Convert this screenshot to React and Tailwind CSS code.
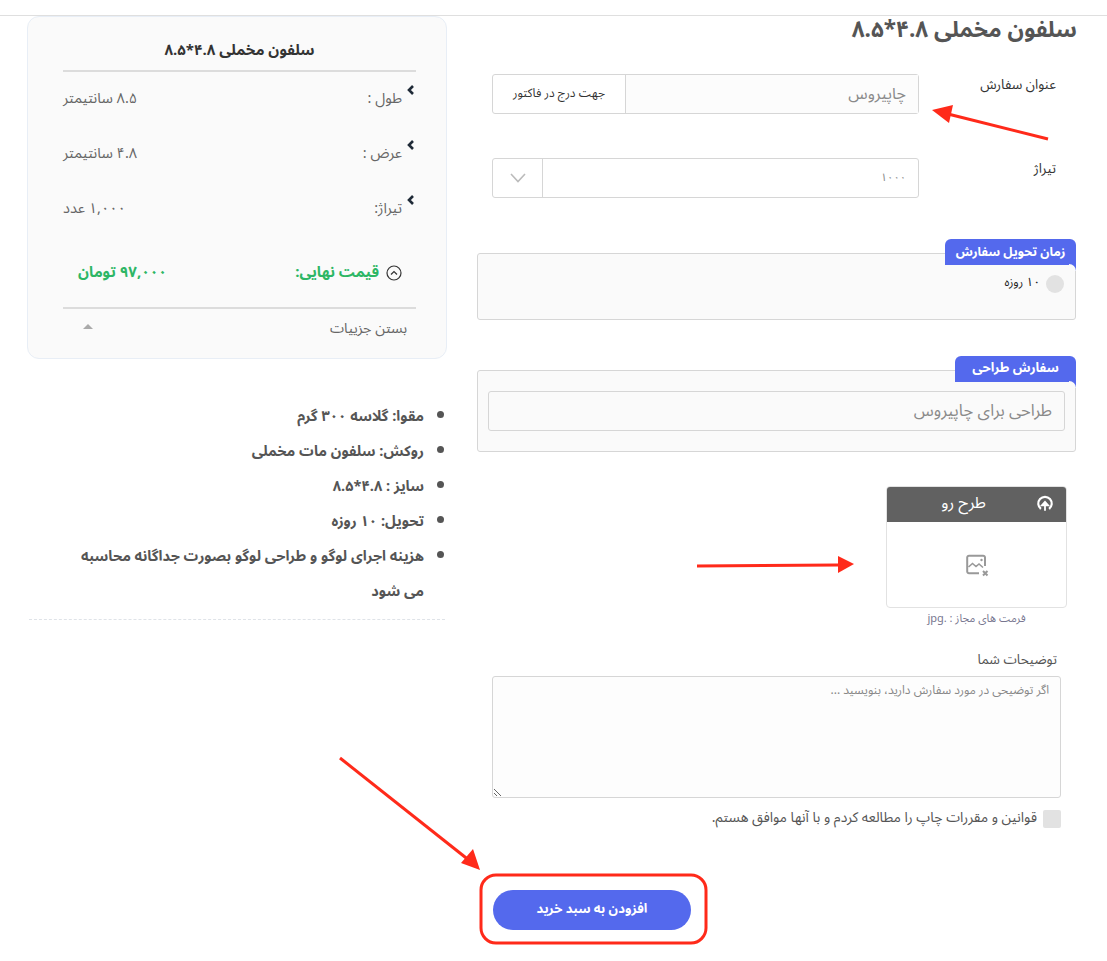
import React from "react";

const FF = "font-['Noto_Sans_Arabic','Vazirmatn','DejaVu_Sans','Noto_Sans',sans-serif]";

function Chevron() {
  return (
    <svg viewBox="0 0 8 10" className="absolute right-[-13px] top-[-3px] w-[8px] h-[10px]" fill="none" stroke="#1f2a37" strokeWidth="2.6">
      <path d="M6 1 L2 5 L6 9" />
    </svg>
  );
}

function SpecRow({ label, value }) {
  return (
    <div className="h-[55px] flex items-center justify-between text-[14.5px] text-[#666] pb-[1px]">
      <span className="relative mr-[14px]">{label}<Chevron /></span>
      <span>{value}</span>
    </div>
  );
}

function Arrows() {
  return (
    <svg className="absolute left-0 top-0 w-[1107px] h-[961px] pointer-events-none" viewBox="0 0 1107 961" fill="none">
      <path d="M1048 139 L948 114" stroke="#ff2a1a" strokeWidth="3" />
      <path d="M932 110 L953 105 L949 123 Z" fill="#ff2a1a" />
      <path d="M697 566 L838 565" stroke="#ff2a1a" strokeWidth="3" />
      <path d="M854 564 L838 556 L838 573 Z" fill="#ff2a1a" />
      <path d="M340 758 L470 861" stroke="#ff2a1a" strokeWidth="3" />
      <path d="M480 870 L461 863 L473 849 Z" fill="#ff2a1a" />
      <rect x="481" y="875" width="225" height="68" rx="15" stroke="#ff2a1a" strokeWidth="3" />
    </svg>
  );
}

function Tab({ children, className }) {
  return (
    <div className={"absolute right-[-1px] top-[-15px] bg-[#5469ed] text-white font-bold h-[26px] rounded-t-[6px] flex items-center justify-center " + className}>
      {children}
      <span className="absolute right-0 top-[25px] w-[7px] h-[7px] bg-[#5469ed]">
        <span className="block w-[7px] h-[7px] bg-[#fafafa] rounded-tr-[7px]" />
      </span>
    </div>
  );
}

export default function App() {
  return (
    <div dir="rtl" className={"relative w-full h-[961px] overflow-hidden bg-white " + FF}>
      <div className="h-[16px] border-b border-[#dfdfdf]" />
      <div className="flex pr-[31px] pl-[27px]">
        {/* right column */}
        <div className="w-[599px] text-[#555]">
          <h1 className="text-[22.5px] leading-[28px] font-bold text-[#555] mr-[-1px]">سلفون مخملی ۴.۸*۸.۵</h1>
          <div className="mt-[30px] flex pr-[20px] h-[40px]">
            <label className="w-[137px] text-[13.5px] text-[#333] leading-[20px] pt-[1px]">عنوان سفارش</label>
            <div className="w-[427px] h-[40px] flex border border-[#d6d6d6] rounded-[3px] bg-white">
              <div className="flex-1 bg-[#fcfcfc] flex items-center px-[12px] text-[16px] text-[#8a8a8a]">چاپیروس</div>
              <div className="w-[133px] border-r border-[#d6d6d6] flex items-center justify-center text-[12px] text-[#333]">جهت درج در فاکتور</div>
            </div>
          </div>
          <div className="mt-[44px] flex pr-[20px] h-[40px]">
            <label className="w-[137px] text-[13.5px] text-[#333] leading-[20px] pt-[1px]">تیراژ</label>
            <div className="w-[427px] h-[40px] flex border border-[#d6d6d6] rounded-[3px]">
              <div className="flex-1 flex items-center px-[12px] text-[11px] text-[#888]">۱۰۰۰</div>
              <div className="w-[50px] border-r border-[#d6d6d6] flex items-center justify-center">
                <svg viewBox="0 0 16 10" className="w-[16px] h-[10px]" fill="none" stroke="#bbb" strokeWidth="1.6"><path d="M1 1 L8 8.5 L15 1" /></svg>
              </div>
            </div>
          </div>
          <div className="relative mt-[55px] h-[67px] border border-[#d6d6d6] rounded-[3px] bg-[#fafafa]">
            <Tab className="w-[131px] text-[12.5px]">زمان تحویل سفارش</Tab>
            <div className="flex items-center mt-[21px] mr-[11px] text-[12px] text-[#222]">
              <span className="w-[18px] h-[18px] rounded-full bg-[#e2e2e2] ml-[6px]" />
              <span className="mt-[-2px]">۱۰ روزه</span>
            </div>
          </div>
          <div className="relative mt-[50px] h-[82px] border border-[#d6d6d6] rounded-[3px] bg-[#fafafa]">
            <Tab className="w-[121px] text-[13px]">سفارش طراحی</Tab>
            <div className="mt-[20px] mx-[10px] h-[40px] border border-[#d6d6d6] rounded-[3px] flex items-center px-[12px] text-[16.5px] text-[#8a8a8a]">طراحی برای چاپیروس</div>
          </div>
          <div className="mt-[34px] mr-[9px] w-[181px]">
            <div className="h-[122px] border border-[#e2e2e2] rounded-[4px] overflow-hidden">
              <div className="h-[35px] bg-[#616161] flex items-center justify-center relative text-white text-[16px]">
                <svg viewBox="0 0 20 20" className="absolute right-[12px] top-[8px] w-[18px] h-[18px]" fill="none">
                  <path d="M5.5 15.5 A7.5 7.5 0 1 1 14.5 15.5" stroke="#fff" strokeWidth="2.4" />
                  <path d="M10 17.5 V10 M6.5 11.5 L10 7.5 L13.5 11.5 Z" stroke="#fff" strokeWidth="2" fill="#fff" />
                </svg>
                <span className="mr-[26px] mt-[-3px]">طرح رو</span>
              </div>
              <div className="flex justify-center pt-[31px]">
                <svg viewBox="0 0 24 24" className="w-[24px] h-[24px]" fill="none" stroke="#999" strokeWidth="2">
                  <path d="M20 13 V4.5 A1.8 1.8 0 0 0 18.2 2.7 H4 A1.8 1.8 0 0 0 2.2 4.5 V18.5 A1.8 1.8 0 0 0 4 20.3 H14" />
                  <path d="M3.5 14 L7.5 10.5 L11 13.5 L14 11 L18 14.5" strokeWidth="1.6" />
                  <circle cx="16.5" cy="7" r="1.2" fill="#999" stroke="none" />
                  <path d="M18 18 L22.5 22.5 M22.5 18 L18 22.5" />
                </svg>
              </div>
            </div>
            <div className="text-center text-[11px] text-[#77768f] mt-[2px] leading-[18px]">فرمت های مجاز : .jpg</div>
          </div>
          <div className="mt-[23px] mr-[19px] text-[13.5px] leading-[18px] text-[#555]">توضیحات شما</div>
          <textarea
            readOnly
            placeholder="اگر توضیحی در مورد سفارش دارید، بنویسید ..."
            className="block mt-[7px] mr-[15px] w-[569px] h-[122px] border border-[#d6d6d6] rounded-[3px] bg-[#fdfdfd] px-[11px] py-[5px] text-[12px] leading-[18px] placeholder:text-[#888] outline-none"
          />
          <div className="mt-[12px] mr-[15px] flex items-center text-[14px] text-[#555]">
            <span className="w-[18px] h-[18px] bg-[#e2e2e2] rounded-[2px] ml-[6px]" />
            <span className="mt-[-3px]">قوانین و مقررات چاپ را مطالعه کردم و با آنها موافق هستم.</span>
          </div>
          <button className="block mt-[62px] mr-[385px] w-[198px] h-[40px] rounded-[20px] bg-[#5469ed] text-white text-[13px] font-bold">افزودن به سبد خرید</button>
        </div>

        {/* left column */}
        <div className="mr-[30px] w-[420px]">
          <div className="h-[343px] bg-[#fafafa] border border-[#e8eef6] rounded-[12px] pr-[30px] pl-[35px]">
            <div className="h-[55px] pt-[14px] flex items-center justify-center text-[15px] font-bold text-[#333] border-b-2 border-[#dcdcdc]">سلفون مخملی ۴.۸*۸.۵</div>
            <SpecRow label="طول :" value="۸.۵ سانتیمتر" />
            <SpecRow label="عرض :" value="۴.۸ سانتیمتر" />
            <SpecRow label="تیراژ:" value="۱,۰۰۰ عدد" />
            <div className="h-[71px] flex items-center justify-between font-bold text-[15px] text-[#2db665] mr-[14px] ml-[15px]">
              <span className="flex items-center gap-[7px]">
                <svg viewBox="0 0 16 16" className="w-[16px] h-[16px]" fill="none" stroke="#333" strokeWidth="1.2"><circle cx="8" cy="8" r="7" /><path d="M5 9.5 L8 6.5 L11 9.5" /></svg>
                قیمت نهایی:
              </span>
              <span>۹۷,۰۰۰ تومان</span>
            </div>
            <div className="mt-[-1px] border-t-2 border-[#dcdcdc] h-[42px] flex items-center justify-between text-[14.3px] text-[#666] pr-[9px] pl-[20px]">
              <span>بستن جزییات</span>
              <span className="w-0 h-0 border-x-[5px] border-x-transparent border-b-[5px] border-b-[#aaa] mt-[-5px]" />
            </div>
          </div>
          <ul className="mt-[40px] pr-[21px] pl-[30px] list-disc text-[14.5px] font-bold text-[#555] leading-[35px] pb-[10px] border-b border-dashed border-[#dfe3e8] mx-[2px]">
            <li>مقوا: گلاسه ۳۰۰ گرم</li>
            <li>روکش: سلفون مات مخملی</li>
            <li>سایز : ۴.۸*۸.۵</li>
            <li>تحویل: ۱۰ روزه</li>
            <li>هزینه اجرای لوگو و طراحی لوگو بصورت جداگانه محاسبه می شود</li>
          </ul>
        </div>
      </div>
      <Arrows />
    </div>
  );
}
